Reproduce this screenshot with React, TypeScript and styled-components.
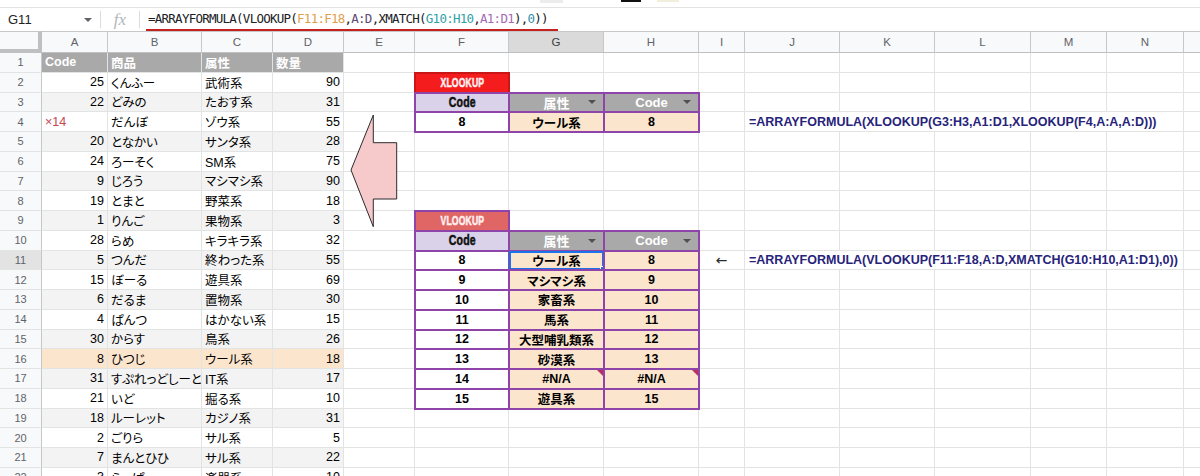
import React from "react";
import styled, { createGlobalStyle, css } from "styled-components";

const SANS = `"Liberation Sans", Arial, "Noto Sans CJK JP", sans-serif`;

const GRID_LINE = "#e2e3e3";
const HEAD_LINE = "#c7c7c7";
const PURPLE = "#8e44a8";
const PEACH = "#fce5cd";
const BAND = "#f3f3f3";

const COL_WIDTHS = [42, 66, 94, 71, 71, 71, 94, 95, 95, 46, 95, 95, 96, 76, 77, 100];
const LETTERS = ["", "A", "B", "C", "D", "E", "F", "G", "H", "I", "J", "K", "L", "M", "N", "O"];
const ROW_COUNT = 22;
const ACTIVE_ROW = 11;
const ACTIVE_COL = 7;

const GlobalStyle = createGlobalStyle`
  html, body { margin: 0; padding: 0; background: #fff; }
  body {
    font-family: ${SANS};
    font-feature-settings: "palt";
    color: #000;
  }
`;

/* ---------- page frame ---------- */

const Screen = styled.div`
  position: relative;
  width: 1200px;
  height: 476px;
  overflow: hidden;
  display: flex;
  flex-direction: column;
  background: #fff;
`;

const ToolbarEdge = styled.div`
  flex: none;
  height: 8px;
  box-sizing: border-box;
  border-bottom: 1px solid #e3e3e3;
  display: flex;
  align-items: flex-start;
  padding-left: 540px;
`;

const ToolMark = styled.span<{ $w: number; $h: number; $c: string; $gap: number }>`
  width: ${(p) => p.$w}px;
  height: ${(p) => p.$h}px;
  background: ${(p) => p.$c};
  margin-right: ${(p) => p.$gap}px;
`;

/* ---------- formula bar ---------- */

const FormulaBar = styled.div`
  flex: none;
  height: 23px;
  display: flex;
  align-items: stretch;
`;

const NameBox = styled.div`
  width: 100px;
  box-sizing: border-box;
  padding: 0 8px;
  display: flex;
  align-items: center;
  font-size: 13px;
  color: #202124;
`;

const Caret = styled.span`
  margin-left: auto;
  width: 0;
  height: 0;
  border-left: 4px solid transparent;
  border-right: 4px solid transparent;
  border-top: 4px solid #5f6368;
`;

const BarDivider = styled.span`
  width: 1px;
  height: 17px;
  align-self: center;
  background: #dadce0;
`;

const FxBox = styled.div`
  width: 38px;
  display: flex;
  align-items: center;
  justify-content: center;
  font-family: "Liberation Serif", "DejaVu Serif", serif;
  font-style: italic;
  font-size: 17px;
  color: #b3b6ba;
`;

const FormulaField = styled.div`
  margin-left: 6px;
  padding: 0 10px 0 2px;
  display: flex;
  align-items: center;
  border-bottom: 2px solid #c5221f;
  font-family: "DejaVu Sans Mono", "Liberation Mono", monospace;
  font-size: 12.5px;
  letter-spacing: -0.75px;
  color: #202124;
  white-space: nowrap;
`;

const Ref = styled.span<{ $c: string }>`
  color: ${(p) => p.$c};
`;

/* ---------- sheet grid ---------- */

const SheetGrid = styled.div`
  flex: none;
  display: grid;
  grid-template-columns: ${COL_WIDTHS.map((w) => `${w}px`).join(" ")};
  grid-template-rows: 22px repeat(${ROW_COUNT}, 19.75px);
`;

const Corner = styled.div`
  box-sizing: border-box;
  background: #f8f9fa;
  border-top: 1px solid ${HEAD_LINE};
  border-right: 4px solid #c0c0c0;
  border-bottom: 4px solid #c0c0c0;
`;

const ColHead = styled.div<{ $active?: boolean }>`
  box-sizing: border-box;
  display: flex;
  align-items: center;
  justify-content: center;
  background: ${(p) => (p.$active ? "#dadada" : "#f8f9fa")};
  border-top: 1px solid ${HEAD_LINE};
  border-right: 1px solid ${HEAD_LINE};
  border-bottom: 1px solid #c0c0c0;
  font-size: 11.5px;
  color: ${(p) => (p.$active ? "#3c4043" : "#5f6368")};
`;

const RowHead = styled.div<{ $active?: boolean }>`
  box-sizing: border-box;
  display: flex;
  align-items: center;
  justify-content: center;
  background: ${(p) => (p.$active ? "#e3e3e3" : "#f8f9fa")};
  border-right: 1px solid ${HEAD_LINE};
  border-bottom: 1px solid ${GRID_LINE};
  font-size: 11px;
  color: #5f6368;
`;

type Align = "left" | "right" | "center";

const Cell = styled.div<{ $align?: Align; $bg?: string; $color?: string; $bold?: boolean }>`
  box-sizing: border-box;
  min-width: 0;
  border-right: 1px solid ${GRID_LINE};
  border-bottom: 1px solid ${GRID_LINE};
  padding: 0 3px;
  display: flex;
  align-items: center;
  justify-content: ${(p) =>
    p.$align === "right" ? "flex-end" : p.$align === "center" ? "center" : "flex-start"};
  background: ${(p) => p.$bg ?? "#fff"};
  color: ${(p) => p.$color ?? "#000"};
  font-weight: ${(p) => (p.$bold ? 700 : 400)};
  font-size: 12.5px;
  white-space: nowrap;
  overflow: hidden;
`;

const BackArrow = styled.span`
  font-family: "DejaVu Sans", sans-serif;
  font-size: 14px;
  color: #2b2b2b;
`;

const FormulaNote = styled.div<{ $span: number }>`
  grid-column: span ${(p) => p.$span};
  box-sizing: border-box;
  border-bottom: 1px solid ${GRID_LINE};
  border-right: 1px solid ${GRID_LINE};
  padding-left: 4px;
  display: flex;
  align-items: center;
  font-size: 12.5px;
  font-weight: 700;
  color: #27237a;
  white-space: nowrap;
  overflow: hidden;
`;

type Tone = "titleHot" | "titleSoft" | "keyHead" | "grayHead" | "key" | "value";

const toneStyles: Record<Tone, ReturnType<typeof css>> = {
  titleHot: css`
    background: #f41c1c;
    border-color: #c91616;
    box-shadow: 0 0 0 1px #c91616;
    color: #fff0f0;
    font-size: 12px;
  `,
  titleSoft: css`
    background: #e06666;
    color: #fff0f0;
    font-size: 12px;
  `,
  keyHead: css`
    background: #d9d2e9;
    color: #111;
    font-size: 13.5px;
  `,
  grayHead: css`
    background: #a9a9a9;
    color: #fff;
    font-size: 13px;
  `,
  key: css`
    background: #fff;
    color: #000;
  `,
  value: css`
    background: ${PEACH};
    color: #000;
  `,
};

const TableCell = styled.div<{ $tone: Tone }>`
  position: relative;
  z-index: 1;
  box-sizing: border-box;
  border: 1px solid ${PURPLE};
  box-shadow: 0 0 0 1px ${PURPLE};
  display: flex;
  align-items: center;
  justify-content: center;
  font-size: 12.5px;
  font-weight: 700;
  white-space: nowrap;
  ${(p) => toneStyles[p.$tone]}
`;

/* heavy condensed lettering used for block titles and key headings */
const Squeezed = styled.span<{ $x: number }>`
  display: inline-block;
  font-weight: 900;
  transform: scale(${(p) => p.$x}, 1.05);
  -webkit-text-stroke: 0.5px currentColor;
  letter-spacing: 0.2px;
`;

const FilterTriangle = styled.span`
  position: absolute;
  right: 7px;
  top: 50%;
  margin-top: -2px;
  width: 0;
  height: 0;
  border-left: 4px solid transparent;
  border-right: 4px solid transparent;
  border-top: 4px solid #505050;
`;

const ErrorFlag = styled.span`
  position: absolute;
  top: 0;
  right: 0;
  width: 0;
  height: 0;
  border-top: 6px solid #b8305f;
  border-left: 6px solid transparent;
`;

const SelectionFrame = styled.span`
  position: absolute;
  inset: -1px;
  border: 2px solid #1a73e8;
  pointer-events: none;
`;

const FillHandle = styled.span`
  position: absolute;
  right: -5px;
  bottom: -5px;
  width: 6px;
  height: 6px;
  background: #1a73e8;
  border: 1px solid #fff;
  z-index: 2;
`;

/* drawing placed on the sheet */
const ArrowShape = styled.svg`
  position: absolute;
  left: 345px;
  top: 110px;
  width: 60px;
  height: 125px;
  overflow: visible;
  pointer-events: none;
  z-index: 3;
`;

/* ---------- data ---------- */

type Item = { code: number | null; name: string; kind: string; qty: number };

const items: Item[] = [
  { code: 25, name: "くんふー", kind: "武術系", qty: 90 },
  { code: 22, name: "どみの", kind: "たおす系", qty: 31 },
  { code: null, name: "だんぼ", kind: "ゾウ系", qty: 55 },
  { code: 20, name: "となかい", kind: "サンタ系", qty: 28 },
  { code: 24, name: "ろーそく", kind: "SM系", qty: 75 },
  { code: 9, name: "じろう", kind: "マシマシ系", qty: 90 },
  { code: 19, name: "とまと", kind: "野菜系", qty: 18 },
  { code: 1, name: "りんご", kind: "果物系", qty: 3 },
  { code: 28, name: "らめ", kind: "キラキラ系", qty: 32 },
  { code: 5, name: "つんだ", kind: "終わった系", qty: 55 },
  { code: 15, name: "ぼーる", kind: "遊具系", qty: 69 },
  { code: 6, name: "だるま", kind: "置物系", qty: 30 },
  { code: 4, name: "ぱんつ", kind: "はかない系", qty: 15 },
  { code: 30, name: "からす", kind: "鳥系", qty: 26 },
  { code: 8, name: "ひつじ", kind: "ウール系", qty: 18 },
  { code: 31, name: "すぷれっどしーと", kind: "IT系", qty: 17 },
  { code: 21, name: "いど", kind: "掘る系", qty: 10 },
  { code: 18, name: "ルーレット", kind: "カジノ系", qty: 31 },
  { code: 2, name: "ごりら", kind: "サル系", qty: 5 },
  { code: 7, name: "まんとひひ", kind: "サル系", qty: 22 },
  { code: 3, name: "らっぱ", kind: "楽器系", qty: 10 },
];

const lookupRows: [string, string, string][] = [
  ["8", "ウール系", "8"],
  ["9", "マシマシ系", "9"],
  ["10", "家畜系", "10"],
  ["11", "馬系", "11"],
  ["12", "大型哺乳類系", "12"],
  ["13", "砂漠系", "13"],
  ["14", "#N/A", "#N/A"],
  ["15", "遊具系", "15"],
];

type Spec =
  | { kind: "plain"; text?: React.ReactNode; align?: Align; bg?: string; color?: string; bold?: boolean }
  | {
      kind: "table";
      tone: Tone;
      text: string;
      squeeze?: number;
      filter?: boolean;
      error?: boolean;
      selected?: boolean;
    }
  | { kind: "note"; text: string; span: number }
  | { kind: "covered" };

const XLOOKUP_NOTE = "=ARRAYFORMULA(XLOOKUP(G3:H3,A1:D1,XLOOKUP(F4,A:A,A:D)))";
const VLOOKUP_NOTE = "=ARRAYFORMULA(VLOOKUP(F11:F18,A:D,XMATCH(G10:H10,A1:D1),0))";

function buildSpecs(): Map<string, Spec> {
  const m = new Map<string, Spec>();
  const put = (r: number, c: number, s: Spec) => m.set(`${r}:${c}`, s);

  ["Code", "商品", "属性", "数量"].forEach((t, i) =>
    put(1, i + 1, { kind: "plain", text: t, bg: "#a9a9a9", color: "#fff", bold: true })
  );

  items.forEach((it, i) => {
    const r = i + 2;
    const bg = r === 16 ? PEACH : r % 2 === 1 ? BAND : "#fff";
    if (it.code === null) {
      put(r, 1, { kind: "plain", text: "×14", bg, color: "#c8464f" });
    } else {
      put(r, 1, { kind: "plain", text: it.code, align: "right", bg });
    }
    put(r, 2, { kind: "plain", text: it.name, bg });
    put(r, 3, { kind: "plain", text: it.kind, bg });
    put(r, 4, { kind: "plain", text: it.qty, align: "right", bg });
  });

  // XLOOKUP block
  put(2, 6, { kind: "table", tone: "titleHot", text: "XLOOKUP", squeeze: 0.72 });
  put(3, 6, { kind: "table", tone: "keyHead", text: "Code", squeeze: 0.78 });
  put(3, 7, { kind: "table", tone: "grayHead", text: "属性", filter: true });
  put(3, 8, { kind: "table", tone: "grayHead", text: "Code", filter: true });
  put(4, 6, { kind: "table", tone: "key", text: "8" });
  put(4, 7, { kind: "table", tone: "value", text: "ウール系" });
  put(4, 8, { kind: "table", tone: "value", text: "8" });
  put(4, 10, { kind: "note", text: XLOOKUP_NOTE, span: 5 });
  [11, 12, 13, 14].forEach((c) => put(4, c, { kind: "covered" }));

  // VLOOKUP block
  put(9, 6, { kind: "table", tone: "titleSoft", text: "VLOOKUP", squeeze: 0.72 });
  put(10, 6, { kind: "table", tone: "keyHead", text: "Code", squeeze: 0.78 });
  put(10, 7, { kind: "table", tone: "grayHead", text: "属性", filter: true });
  put(10, 8, { kind: "table", tone: "grayHead", text: "Code", filter: true });
  lookupRows.forEach(([k, v, c], i) => {
    const r = 11 + i;
    const isError = v === "#N/A";
    put(r, 6, { kind: "table", tone: "key", text: k });
    put(r, 7, { kind: "table", tone: "value", text: v, error: isError, selected: r === ACTIVE_ROW });
    put(r, 8, { kind: "table", tone: "value", text: c, error: isError });
  });
  put(11, 9, { kind: "plain", text: <BackArrow>←</BackArrow>, align: "center" });
  put(11, 10, { kind: "note", text: VLOOKUP_NOTE, span: 5 });
  [11, 12, 13, 14].forEach((c) => put(11, c, { kind: "covered" }));

  return m;
}

const specs = buildSpecs();

function renderCell(r: number, c: number) {
  const key = `${r}:${c}`;
  const s: Spec = specs.get(key) ?? { kind: "plain" };
  switch (s.kind) {
    case "covered":
      return null;
    case "note":
      return (
        <FormulaNote key={key} $span={s.span}>
          {s.text}
        </FormulaNote>
      );
    case "table":
      return (
        <TableCell key={key} $tone={s.tone}>
          {s.squeeze ? <Squeezed $x={s.squeeze}>{s.text}</Squeezed> : s.text}
          {s.filter && <FilterTriangle />}
          {s.error && <ErrorFlag />}
          {s.selected && (
            <>
              <SelectionFrame />
              <FillHandle />
            </>
          )}
        </TableCell>
      );
    default:
      return (
        <Cell key={key} $align={s.align} $bg={s.bg} $color={s.color} $bold={s.bold}>
          {s.text}
        </Cell>
      );
  }
}

export default function App() {
  const rows = Array.from({ length: ROW_COUNT }, (_, i) => i + 1);
  return (
    <>
      <GlobalStyle />
      <Screen>
        <ToolbarEdge>
          <ToolMark $w={23} $h={3} $c="#ececec" $gap={58} />
          <ToolMark $w={20} $h={2} $c="#111" $gap={16} />
          <ToolMark $w={22} $h={2} $c="#f1eedb" $gap={0} />
        </ToolbarEdge>

        <FormulaBar>
          <NameBox>
            G11
            <Caret />
          </NameBox>
          <BarDivider />
          <FxBox>fx</FxBox>
          <BarDivider />
          <FormulaField>
            =ARRAYFORMULA(VLOOKUP(<Ref $c="#dfa04e">F11:F18</Ref>,<Ref $c="#5e4a72">A:D</Ref>,XMATCH(
            <Ref $c="#2fa2a6">G10:H10</Ref>,<Ref $c="#a46bb4">A1:D1</Ref>),<Ref $c="#2f8fb0">0</Ref>))
          </FormulaField>
        </FormulaBar>

        <SheetGrid>
          <Corner />
          {LETTERS.slice(1).map((l, i) => (
            <ColHead key={l} $active={i + 1 === ACTIVE_COL}>
              {l}
            </ColHead>
          ))}
          {rows.map((r) => (
            <React.Fragment key={r}>
              <RowHead $active={r === ACTIVE_ROW}>{r}</RowHead>
              {LETTERS.slice(1).map((_, i) => renderCell(r, i + 1))}
            </React.Fragment>
          ))}
        </SheetGrid>

        <ArrowShape viewBox="0 0 60 125">
          <polygon
            points="6,60 28.3,5 28.3,32.7 51.7,32.7 51.7,89 28.3,89 28.3,116.7"
            fill="#f6c9cb"
            stroke="#2b2b2b"
            strokeWidth="1"
            strokeLinejoin="miter"
          />
        </ArrowShape>
      </Screen>
    </>
  );
}
